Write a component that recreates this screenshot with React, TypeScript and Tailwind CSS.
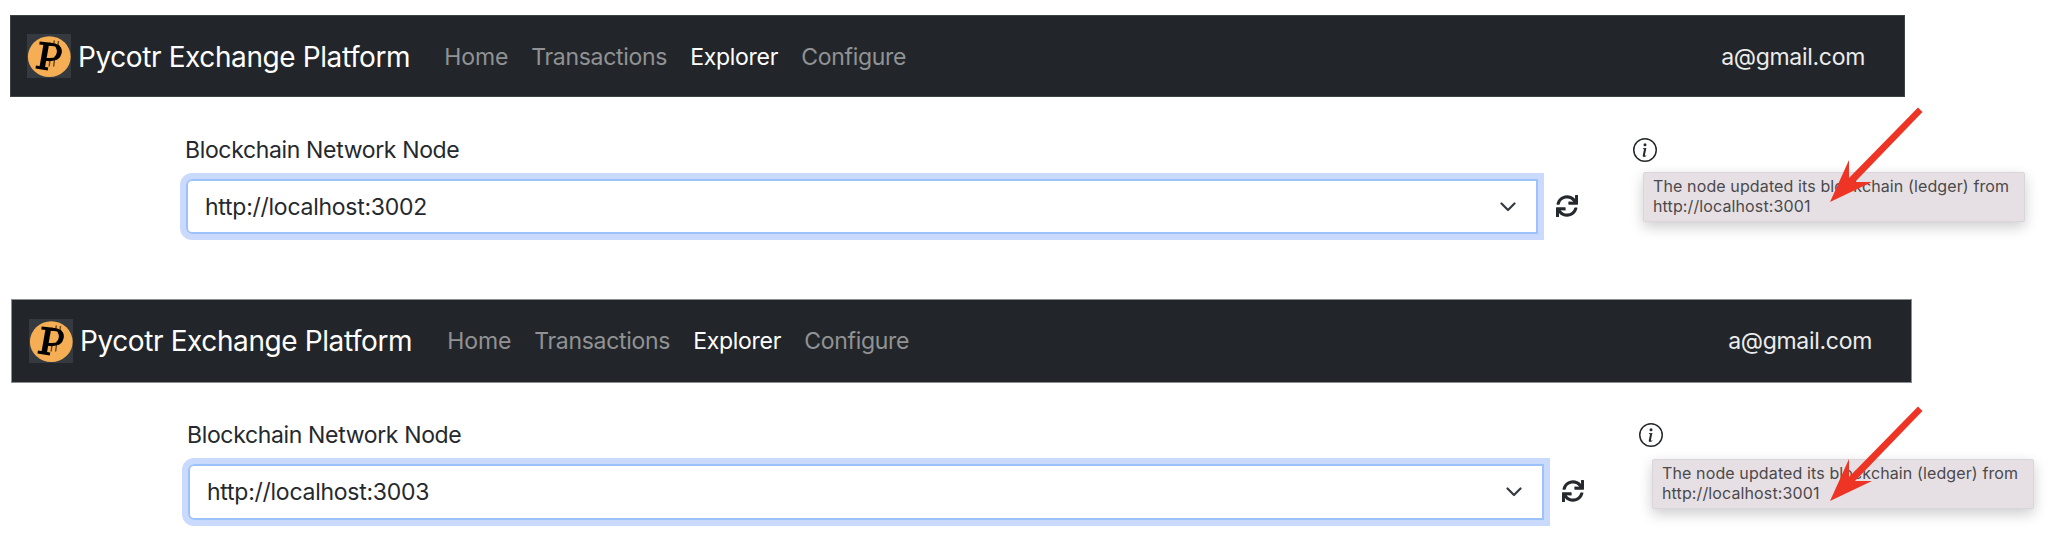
import { FaSync } from "react-icons/fa";
import { BsInfoCircle } from "react-icons/bs";

function Logo() {
  return (
    <svg viewBox="0 0 44 44" className="h-11 w-11 shrink-0" aria-hidden="true">
      <rect width="44" height="44" fill="#343a3f" />
      <ellipse cx="22.3" cy="22.7" rx="21.4" ry="20.4" fill="#f6ae55" />
      <g fill="none" stroke="#000">
        <path d="M27.300 6.500 26.500 12M31.500 7 30.700 12.500M23 26l-.9 6.500M27.500 26l-.9 6.500" stroke="#5f4525" strokeWidth="1.400" />
        <path d="M19.500 9 15 34.500" strokeWidth="5.500" />
        <path d="M12.500 9 24 10.300" strokeWidth="3" />
        <path d="M22 10.300C31 10.500 34.200 14 33.200 19 32 24.500 27 26.500 18 25.300" strokeWidth="3" />
        <path d="M30 12C33 15 32.500 21.500 28.500 24.300" strokeWidth="4" />
        <path d="M8.700 33 21 35" strokeWidth="3" />
      </g>
    </svg>
  );
}

function Arrow({ className }: { className: string }) {
  return (
    <svg viewBox="0 0 94 96" className={`absolute h-24 w-[94px] ${className}`} aria-hidden="true">
      <path d="M0 95 19 53V71L88 .5 92.500 5 25 75H42Z" fill="#ee3424" />
    </svg>
  );
}

const tracked = "tracking-[-0.3px]";

type PanelProps = {
  url: string;
  panel: string;
  bar: string;
  title: string;
  nav: string;
  email: string;
  body: string;
  select: string;
  refresh: string;
  info: string;
  tooltip: string;
  arrow: string;
};

function Panel({ url, panel, bar, title, nav, email, body, select, refresh, info, tooltip, arrow }: PanelProps) {
  return (
    <section className={`relative ${panel}`}>
      <header className={`flex items-center border bg-[#22262a] ${bar}`}>
        <Logo />
        <div className={`ml-[7px] text-[28px] leading-10 tracking-[-0.4px] text-white ${title}`}>Pycotr Exchange Platform</div>
        <nav className={`flex text-[23px] leading-8 text-[#919294] ${nav}`}>
          <a className="w-[87px] tracking-[-0.1px]">Home</a>
          <a className={`w-[159px] ${tracked}`}>Transactions</a>
          <a className={`w-[111px] text-white ${tracked}`}>Explorer</a>
          <a className={tracked}>Configure</a>
        </nav>
        <div className={`ml-auto text-[23px] leading-8 text-[#ececec] ${tracked} ${email}`}>a@gmail.com</div>
      </header>
      <div className={`flex text-[#25292d] ${body}`}>
        <div>
          <div className="-ml-px text-[23px] leading-8 tracking-[-0.35px]">Blockchain Network Node</div>
          <div className={`mt-[13px] flex items-center justify-between rounded-l-[6px] border-2 border-[#9dc1fa] pl-[17px] pr-[20px] text-[23px] leading-8 tracking-[-0.26px] shadow-[0_0_0_6px_#cadafc] ${select}`}>
            <span>{url}</span>
            <svg viewBox="0 0 16 10" className="h-[10px] w-4" fill="none" stroke="#343a40" strokeWidth="2.200" strokeLinecap="round" strokeLinejoin="round">
              <path d="m1.500 1.500 6.500 6.500 6.500-6.500" />
            </svg>
          </div>
        </div>
        <FaSync className={`mt-[61px] h-[22px] w-[22px] ${refresh}`} />
        <BsInfoCircle className={`h-6 w-6 ${info}`} />
      </div>
      <div className={`absolute h-[50px] w-[382px] whitespace-nowrap rounded-[2px] border border-[#d9d5d8] bg-[#e6e0e4] pl-[9px] pt-[3px] text-[16px] leading-5 text-[#4b494b] shadow-[0_5px_14px_rgba(0,0,0,0.2)] ${tooltip}`}>
        <div className="tracking-[0.12px]">The node updated its blockchain (ledger) from</div>
        <div className="tracking-[0.12px]">http://localhost:3001</div>
      </div>
      <Arrow className={arrow} />
    </section>
  );
}

export default function App() {
  return (
    <main className="h-[544px] w-[2064px] overflow-hidden bg-white font-['Inter','Liberation_Sans',sans-serif]">
      <Panel
        url="http://localhost:3002"
        panel="h-[284px] pt-[15px]"
        bar="ml-[10px] h-[82px] w-[1895px] border-[#3d4245] pl-4"
        title="pt-[2px]"
        nav="ml-[34px] pt-[2px]"
        email="mr-[39px] pt-[2px]"
        body="ml-[186px] mt-[37px]"
        select="h-[55px] w-[1352px]"
        refresh="ml-[18px]"
        info="ml-[55px] mt-[4px]"
        tooltip="left-[1643px] top-[172px]"
        arrow="left-[1830px] top-[107px]"
      />
      <Panel
        url="http://localhost:3003"
        panel="h-[260px] pt-[15px]"
        bar="ml-[11px] h-[84px] w-[1901px] border-[#8b8e90] pl-[17px]"
        title=""
        nav="ml-[35px]"
        email="mr-[39px]"
        body="ml-[188px] mt-[36px]"
        select="h-[56px] w-[1356px]"
        refresh="ml-[18px]"
        info="ml-[55px] mt-[4px]"
        tooltip="left-[1652px] top-[175px]"
        arrow="left-[1830px] top-[122px]"
      />
    </main>
  );
}
